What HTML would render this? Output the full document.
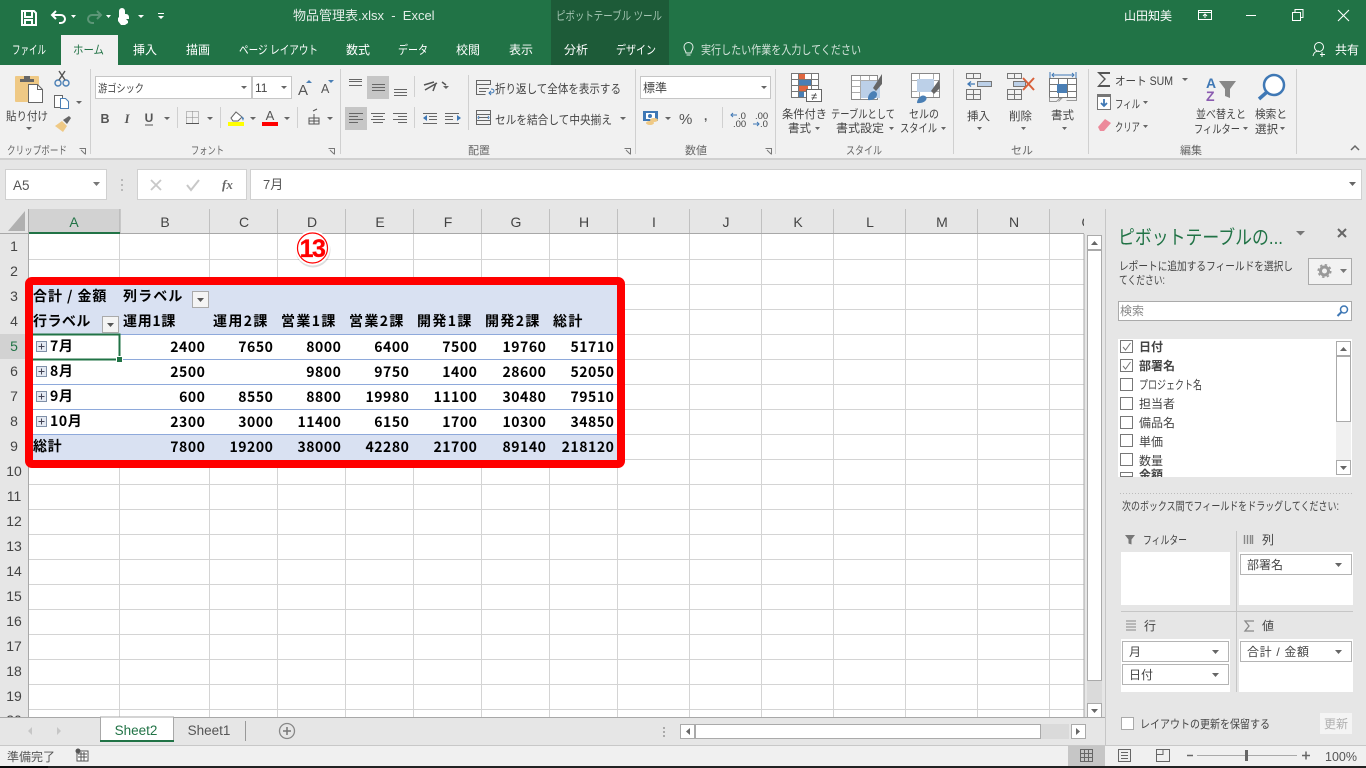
<!DOCTYPE html>
<html lang="ja"><head><meta charset="utf-8"><title>物品管理表.xlsx - Excel</title>
<style>
html,body{margin:0;padding:0;background:#e6e6e6;overflow:hidden}
svg{display:block;position:absolute;left:0;top:0}
text{font-family:"Liberation Sans","Noto Sans CJK JP",sans-serif;font-size:12px;fill:#444;white-space:pre}
.w text,text.w{fill:#fff}
.m{text-anchor:middle}
.e{text-anchor:end}
.h{font-size:14px;fill:#444;text-anchor:middle}
.t text{font-family:"Noto Sans CJK JP",sans-serif;font-size:14px;font-weight:700;fill:#000;letter-spacing:.6px}
.n text{text-anchor:end;letter-spacing:.55px}
.ln{fill:none;stroke:#666;stroke-width:1}
</style></head><body>
<svg width="1366" height="768" viewBox="0 0 1366 768" xmlns="http://www.w3.org/2000/svg">
<!-- backgrounds -->
<rect width="1366" height="768" fill="#e6e6e6"/>
<rect width="1366" height="65" fill="#217346"/>
<rect x="551" width="118" height="65" fill="#1d5b38"/>
<rect y="65" width="1366" height="93" fill="#f1f1f1"/>
<rect y="158" width="1366" height="2" fill="#d0d0d0"/>
<rect x="61" y="35" width="57" height="31" fill="#f1f1f1"/>

<!-- QAT -->
<path d="M22 11h12l2 2v12H22z M25 11v6h7v-6 M25 25v-5h7v5" fill="none" stroke="#fff" stroke-width="2"/>
<path d="M56 11l-4 4 4 4 M52 15h9a4 4 0 0 1 4 4 4 4 0 0 1-4 4h-2" fill="none" stroke="#fff" stroke-width="2"/>
<path d="M71 15h5l-2.500 3zM106 15h5l-2.500 3zM138 15h6l-3 3zM158 13h6v1h-6zM158 16h6l-3 3z" fill="#fff"/>
<path d="M97 11l4 4-4 4 M101 15h-9a4 4 0 0 0-4 4 4 4 0 0 0 4 4h2" fill="none" stroke="#5c9677" stroke-width="2"/>
<path d="M119 17v-6a3 3 0 0 1 6 0v3h1a3 3 0 0 1 3 3v2h-3l2 2v2l-3 2h-4l-3-4v-3z" fill="#fff"/>

<!-- title -->
<text x="293" y="20" style="font-size:13px;fill:#e4eee8">物品管理表.xlsx  -  Excel</text>
<text x="556" y="20" style="fill:#a5c6b3" textLength="106" lengthAdjust="spacingAndGlyphs">ピボットテーブル ツール</text>
<text x="1124" y="20" class="w" style="font-size:12px">山田知美</text>
<path d="M1198.500 10.500h13v9h-13zM1198.500 12.500h13M1205 18v-4M1203 16l2-2 2 2" fill="none" stroke="#fff"/>
<path d="M1246 15.500h10" stroke="#fff"/>
<path d="M1292.500 12.500h8v8h-8zM1295 12v-2.500h8v8h-2.500" fill="none" stroke="#fff"/>
<path d="M1338 10l11 11M1349 10l-11 11" stroke="#fff" stroke-width="1.100"/>

<!-- tabs -->
<g class="w">
<text x="12" y="54" textLength="34" lengthAdjust="spacingAndGlyphs">ファイル</text>
<text x="133" y="54">挿入</text>
<text x="186" y="54">描画</text>
<text x="239" y="54" textLength="79" lengthAdjust="spacingAndGlyphs">ページ レイアウト</text>
<text x="346" y="54">数式</text>
<text x="398" y="54" textLength="30" lengthAdjust="spacingAndGlyphs">データ</text>
<text x="456" y="54">校閲</text>
<text x="509" y="54">表示</text>
<text x="564" y="54">分析</text>
<text x="616" y="54" textLength="40" lengthAdjust="spacingAndGlyphs">デザイン</text>
<text x="1335" y="54">共有</text>
</g>
<text x="73" y="54" style="fill:#217346" textLength="31" lengthAdjust="spacingAndGlyphs">ホーム</text>
<text x="701" y="54" style="fill:#d3e3da" textLength="160" lengthAdjust="spacingAndGlyphs">実行したい作業を入力してください</text>
<path d="M686 53c0-2-2-3-2-6a4.500 4.500 0 0 1 9 0c0 3-2 4-2 6zM686.500 55h4" fill="none" stroke="#e5efe9"/>
<circle cx="1319" cy="47" r="4.500" fill="none" stroke="#fff"/>
<path d="M1313 56c1-4 3-5 6-5M1322 52v5M1320 54.500h5" fill="none" stroke="#fff"/>

<!-- ribbon separators -->
<path d="M90.500 69v85M340.500 69v85M635.500 69v85M775.500 69v85M953.500 69v85M1088.500 69v85M1296.500 69v85" stroke="#d0d0d0"/>
<path d="M177.500 107v21M220.500 107v21M297.500 107v21M414.500 76v21M414.500 107v21M468.500 75v55M722.500 107v21" stroke="#d0d0d0"/>

<!-- clipboard -->
<rect x="15" y="76" width="24" height="26" rx="1" fill="#efc985"/>
<path d="M20 79h4v-3h6v3h4v3H20z" fill="#666"/>
<path d="M28.500 84.500h9l5 5v13h-14z" fill="#fff" stroke="#666"/>
<path d="M37.500 84.500v5h5" fill="none" stroke="#666"/>
<text x="6" y="120" style="font-size:11.500px" textLength="42" lengthAdjust="spacingAndGlyphs">貼り付け</text>
<path d="M26 127h6l-3 3z" fill="#666"/>
<!-- scissors -->
<circle cx="58" cy="83" r="3" fill="none" stroke="#4a7fb5" stroke-width="1.400"/><circle cx="66" cy="83" r="3" fill="none" stroke="#4a7fb5" stroke-width="1.400"/>
<path d="M59 80l6-9M65 80l-6-9" stroke="#555" stroke-width="1.400"/>
<!-- copy -->
<path d="M54.500 95.500h8v12h-8z" fill="#fff" stroke="#666"/><path d="M60.500 98.500h5l3 3v7h-8z" fill="#fff" stroke="#4a7fb5"/>
<path d="M76 101h6l-3 3z" fill="#666"/>
<!-- brush -->
<path d="M55 126l7-5 5 5-4 6z" fill="#efc985"/><path d="M63 120l6-4 2 2-4 6z" fill="#666"/>
<!-- font boxes -->
<rect x="95.500" y="76.500" width="156" height="22" fill="#fff" stroke="#c6c6c6"/>
<rect x="252.500" y="76.500" width="39" height="22" fill="#fff" stroke="#c6c6c6"/>
<text x="98" y="92" style="font-size:11px" textLength="46" lengthAdjust="spacingAndGlyphs">游ゴシック</text>
<text x="255" y="92" style="font-size:12px">11</text>
<path d="M241 86h6l-3 3zM281 86h6l-3 3z" fill="#666"/>
<text x="298" y="95" style="font-size:15px;fill:#555">A</text>
<path d="M306 83h6l-3-3z" fill="#4a7fb5"/>
<text x="321" y="93" style="font-size:12.500px;fill:#555">A</text>
<path d="M328 80h6l-3 3z" fill="#4a7fb5"/>
<!-- font row2 -->
<text x="105" y="123" class="m" style="font-weight:700;font-size:12.500px;fill:#555">B</text>
<text x="127" y="123" class="m" style="font-style:italic;font-weight:700;font-family:'Liberation Serif';font-size:12.500px;fill:#555">I</text>
<text x="149" y="122" class="m" style="font-weight:700;font-size:12px;fill:#555">U</text>
<path d="M145 125h8" stroke="#555"/>
<path d="M164 117h6l-3 3zM207 117h6l-3 3zM250 117h6l-3 3zM284 117h6l-3 3zM327 117h6l-3 3z" fill="#666"/>
<path d="M186.500 111.500h12v12h-12zM192.500 111.500v12M186.500 117.500h12" fill="none" stroke="#888" stroke-dasharray="1 1"/>
<path d="M186 123.500h13" stroke="#555"/>
<path d="M231 118l5-6 6 5-4 4h-5z" fill="#fff" stroke="#666"/>
<path d="M241 116l3 2-1 3z" fill="#4a7fb5"/>
<rect x="228" y="122" width="16" height="4" fill="#ff0"/>
<text x="270" y="120" class="m" style="font-size:13px;fill:#555">A</text>
<rect x="262" y="122" width="16" height="4" fill="#f00"/>
<path d="M313 111l4-2M309 118h10v6h-10zM314 114v10M309 121h10" fill="none" stroke="#555"/>
<text x="7" y="154" style="font-size:11px;fill:#666" textLength="60" lengthAdjust="spacingAndGlyphs">クリップボード</text>
<text x="191" y="154" style="font-size:11px;fill:#666" textLength="33" lengthAdjust="spacingAndGlyphs">フォント</text>
<text x="468" y="154" style="font-size:11px;fill:#666">配置</text>
<text x="685" y="154" style="font-size:11px;fill:#666">数値</text>
<text x="846" y="154" style="font-size:11px;fill:#666" textLength="36" lengthAdjust="spacingAndGlyphs">スタイル</text>
<text x="1011" y="154" style="font-size:11px;fill:#666">セル</text>
<text x="1180" y="154" style="font-size:11px;fill:#666">編集</text>
<path d="M79.500 148.500h6v6M81 150l4 4M328.500 148.500h6v6M330 150l4 4M624.500 148.500h6v6M626 150l4 4M765.500 148.500h6v6M767 150l4 4" fill="none" stroke="#777"/>
<path d="M1351 150l4-4 4 4" fill="none" stroke="#666" stroke-width="1.500"/>

<!-- alignment -->
<rect x="367" y="76" width="22" height="23" fill="#c6c6c6"/>
<rect x="345" y="107" width="22" height="23" fill="#c6c6c6"/>
<path d="M349 79.500h13M349 81.500h13M349 85.500h13M372 84.500h13M372 87.500h13M372 90.500h13M394 89.500h13M394 92.500h13M394 95.500h13" stroke="#666"/>
<path d="M349 113.500h14M349 116.500h9M349 119.500h14M349 122.500h9M371 113.500h14M373 116.500h10M371 119.500h14M373 122.500h10M393 113.500h14M398 116.500h9M393 119.500h14M398 122.500h9" stroke="#666"/>
<path d="M424 85l10-3M425 90l12-7M433 91l3-8M442 82l4 3" fill="none" stroke="#555" stroke-width="1.500"/>
<path d="M443 86h6l-3 3zM620 117h6l-3 3z" fill="#666"/>
<path d="M423 113.500h14M429 116.500h8M429 119.500h8M423 123.500h14M445 113.500h14M445 116.500h8M445 119.500h8M445 123.500h14" stroke="#666"/>
<path d="M427 115l-4 3 4 3zM457 115l4 3-4 3z" fill="#3f78b5"/>
<path d="M476.500 80.500h14v4h-14zM476.500 84.500v10h9M479 88.500h10M479 91.500h7" fill="none" stroke="#666"/>
<path d="M491 89c2 0 3 1 3 2s-1 2-3 2h-2M491 91l-2 2 2 2" fill="none" stroke="#3f78b5"/>
<text x="495" y="93" textLength="126" lengthAdjust="spacingAndGlyphs">折り返して全体を表示する</text>
<path d="M476.500 110.500h14v14h-14zM476.500 114.500h14M476.500 120.500h14M479 117.500h9" fill="none" stroke="#666"/>
<path d="M479 116l-1 1.500 1 1.500M488 116l1 1.500-1 1.500" fill="none" stroke="#3f78b5"/>
<text x="495" y="124" textLength="117" lengthAdjust="spacingAndGlyphs">セルを結合して中央揃え</text>

<!-- number -->
<rect x="640.500" y="76.500" width="130" height="22" fill="#fff" stroke="#c6c6c6"/>
<text x="643" y="92">標準</text>
<path d="M761 86h6l-3 3zM665 117h6l-3 3z" fill="#666"/>
<rect x="643" y="111" width="15" height="10" fill="#3f78b5"/><rect x="646" y="113" width="9" height="6" fill="#fff"/><circle cx="650" cy="116" r="2" fill="#3f78b5"/>
<ellipse cx="650" cy="123" rx="4" ry="2" fill="#efc985"/><ellipse cx="654" cy="120" rx="4" ry="2" fill="#efc985"/>
<text x="679" y="124" style="font-size:15px;fill:#555">%</text>
<text x="704" y="120" style="font-size:12px;font-weight:700;fill:#555">,</text>
<path d="M722.500 107v21" stroke="#d0d0d0"/>
<text x="738" y="119" style="font-size:9.500px">.0</text><text x="733" y="127" style="font-size:9.500px">.00</text>
<path d="M731 115h6M733 113l-2 2 2 2" fill="none" stroke="#3f78b5"/>
<text x="755" y="119" style="font-size:9.500px">.00</text><text x="760" y="127" style="font-size:9.500px">.0</text>
<path d="M753 124h6M757 122l2 2-2 2" fill="none" stroke="#3f78b5"/>

<!-- styles -->
<path d="M791.500 73.500h27v24h-27zM791.500 79.500h27M791.500 85.500h27M791.500 91.500h27M798.500 73.500v24M811.500 73.500v24" fill="#fff" stroke="#777"/>
<rect x="799" y="74" width="6" height="5" fill="#e0663f"/><rect x="799" y="80" width="12" height="5" fill="#4a7fb5"/><rect x="799" y="86" width="9" height="5" fill="#e0663f"/><rect x="799" y="92" width="5" height="5" fill="#4a7fb5"/>
<rect x="806.500" y="89.500" width="15" height="12" fill="#fff" stroke="#666"/>
<text x="814" y="100" class="m" style="font-size:11px;fill:#333">≠</text>
<text x="782" y="118" style="font-size:11.500px" textLength="45" lengthAdjust="spacingAndGlyphs">条件付き</text>
<text x="788" y="132" style="font-size:11.500px">書式</text>
<path d="M815 127h5l-2.500 3zM889 127h5l-2.500 3zM941 127h5l-2.500 3z" fill="#666"/>
<path d="M851.500 75.500h26v24h-26z" fill="#fff" stroke="#888"/>
<path d="M852 80.500h25M852 86.500h25M852 92.500h25M860.500 76v23M869.500 76v23" stroke="#aaa"/>
<rect x="861" y="81" width="19" height="17" fill="#bcd0e8"/>
<path d="M882 74l-9 14 3 3 6-7z" fill="#666"/><path d="M868 98c0-4 5-9 8-6 3 3-1 9-8 8z" fill="#4a7fb5"/>
<text x="831" y="118" style="font-size:11.500px" textLength="64" lengthAdjust="spacingAndGlyphs">テーブルとして</text>
<text x="836" y="132" style="font-size:11.500px" textLength="48" lengthAdjust="spacingAndGlyphs">書式設定</text>
<path d="M911.500 73.500h28v24h-28z" fill="#fff" stroke="#888"/>
<path d="M912 80.500h27M912 91.500h27M919.500 74v23M933.500 74v23" stroke="#aaa"/>
<rect x="917" y="79" width="17" height="13" fill="#bcd0e8"/>
<path d="M939 80l-8 11 3 3 6-6z" fill="#666"/><path d="M917 103c0-4 4-9 8-7 4 2 0 8-8 7z" fill="#4a7fb5"/>
<text x="909" y="118" style="font-size:11.500px" textLength="30" lengthAdjust="spacingAndGlyphs">セルの</text>
<text x="900" y="132" style="font-size:11.500px" textLength="37" lengthAdjust="spacingAndGlyphs">スタイル</text>

<!-- cells group -->
<path d="M966.500 73.500h14v5h-14zM973.500 73.500v5M966.500 89.500h14v10h-14zM973.500 89.500v10M966.500 94.500h14" fill="none" stroke="#777"/>
<rect x="977.500" y="81.500" width="14" height="5" fill="#bcd0e8" stroke="#777"/>
<path d="M975 84h-6M971 81.500l-3 2.500 3 2.500" fill="none" stroke="#3f78b5" stroke-width="1.300"/>
<text x="967" y="120" style="font-size:11.500px">挿入</text>
<path d="M977 127h5l-2.500 3zM1021 127h5l-2.500 3zM1062 127h5l-2.500 3z" fill="#666"/>
<path d="M1007.500 73.500h14v5h-14zM1014.500 73.500v5M1007.500 89.500h14v10h-14zM1014.500 89.500v10M1007.500 94.500h14" fill="none" stroke="#777"/>
<rect x="1013.500" y="81.500" width="12" height="5" fill="#bcd0e8" stroke="#777"/>
<path d="M1023 78l11 12M1034 78l-11 12" stroke="#d9603a" stroke-width="2"/>
<text x="1009" y="120" style="font-size:11.500px">削除</text>
<path d="M1049.500 78.500h27v19h-27zM1058.500 78.500v19M1067.500 78.500v19M1049.500 84.500h27M1049.500 91.500h27" fill="#fff" stroke="#777"/>
<rect x="1057" y="84" width="10" height="9" fill="#4a7fb5"/>
<path d="M1050 72v6M1076 72v6M1052 75h22M1054 73l-2 2 2 2M1072 73l2 2-2 2" fill="none" stroke="#3f78b5"/>
<path d="M1049.500 97.500v4h7l3-3h2l-3 3M1076.500 97.500v3h-10" fill="none" stroke="#999"/>
<text x="1051" y="119" style="font-size:11.500px">書式</text>

<!-- editing -->
<path d="M1097 72h13v2h-9l5 5-6 6h10v2h-13l7-8z" fill="#555"/>
<text x="1115" y="85" style="font-size:11.500px" textLength="58" lengthAdjust="spacingAndGlyphs">オート SUM</text>
<path d="M1182 78h6l-3 3zM1143 101h5l-2.500 3zM1143 125h5l-2.500 3zM1243 127h5l-2.500 3zM1280 127h5l-2.500 3z" fill="#666"/>
<rect x="1097.500" y="95.500" width="13" height="14" fill="#fff" stroke="#777"/>
<rect x="1097" y="94" width="14" height="3" fill="#777"/>
<path d="M1104 99v7M1101 103l3 3 3-3" fill="none" stroke="#3f78b5" stroke-width="1.800"/>
<text x="1115" y="108" style="font-size:11.500px" textLength="25" lengthAdjust="spacingAndGlyphs">フィル</text>
<path d="M1098 127l7-8 6 4-7 8h-4z" fill="#ec8a9b"/>
<text x="1115" y="131" style="font-size:11.500px" textLength="25" lengthAdjust="spacingAndGlyphs">クリア</text>
<text x="1206" y="88" style="font-size:14px;font-weight:700;fill:#3f78b5">A</text>
<text x="1206" y="101" style="font-size:14px;font-weight:700;fill:#8a5bb0">Z</text>
<path d="M1219 81h17l-6 8v9l-5-2v-7z" fill="#888"/>
<text x="1196" y="118" style="font-size:11.500px" textLength="50" lengthAdjust="spacingAndGlyphs">並べ替えと</text>
<text x="1194" y="133" style="font-size:11.500px" textLength="46" lengthAdjust="spacingAndGlyphs">フィルター</text>
<circle cx="1274" cy="85" r="10" fill="#fff" stroke="#3f78b5" stroke-width="2.500"/>
<path d="M1267 92l-8 7" stroke="#3f78b5" stroke-width="3.500"/>
<text x="1255" y="118" style="font-size:11.500px" textLength="32" lengthAdjust="spacingAndGlyphs">検索と</text>
<text x="1255" y="133" style="font-size:11.500px">選択</text>

<!-- formula bar -->
<rect x="5.500" y="169.500" width="101" height="30" fill="#fff" stroke="#d0d0d0"/>
<text x="13" y="190" style="font-size:13.500px;fill:#555">A5</text>
<path d="M93 182h7l-3.500 4z" fill="#777"/>
<path d="M122 179v2M122 184v2M122 189v2" stroke="#aaa" stroke-width="1.500"/>
<rect x="137.500" y="169.500" width="109" height="30" fill="#fff" stroke="#d0d0d0"/>
<rect x="250.500" y="169.500" width="1111" height="30" fill="#fff" stroke="#d0d0d0"/>
<path d="M151 180l10 10M161 180l-10 10" stroke="#c8c8c8" stroke-width="1.800"/>
<path d="M187 185l4 5 8-10" fill="none" stroke="#c8c8c8" stroke-width="2"/>
<text x="222" y="189" style="font-family:'Liberation Serif';font-style:italic;font-weight:700;font-size:13px;fill:#666">fx</text>
<text x="263" y="189" style="font-size:13px;fill:#555">7月</text>
<path d="M1349 182h7l-3.500 4z" fill="#666"/>

<!-- headers -->
<rect y="209" width="1085" height="25" fill="#e6e6e6"/>
<rect y="234" width="29" height="483" fill="#e6e6e6"/>
<rect x="29" y="209" width="91" height="25" fill="#d2d2d2"/>
<rect x="0" y="334" width="29" height="25" fill="#d2d2d2"/>
<path d="M25 211v20H8z" fill="#b0b0b0"/>
<path d="M209.500 209v25M277.500 209v25M345.500 209v25M413.500 209v25M481.500 209v25M549.500 209v25M617.500 209v25M689.500 209v25M761.500 209v25M833.500 209v25M905.500 209v25M977.500 209v25M1049.500 209v25" stroke="#c0c0c0"/>
<path d="M120 209v25" stroke="#aaa"/>
<g class="h">
<text x="74" y="227" class="h" style="fill:#217346">A</text><text x="165" y="227" class="h">B</text><text x="244" y="227" class="h">C</text><text x="312" y="227" class="h">D</text><text x="380" y="227" class="h">E</text><text x="448" y="227" class="h">F</text><text x="516" y="227" class="h">G</text><text x="584" y="227" class="h">H</text><text x="654" y="227" class="h">I</text><text x="726" y="227" class="h">J</text><text x="798" y="227" class="h">K</text><text x="870" y="227" class="h">L</text><text x="942" y="227" class="h">M</text><text x="1014" y="227" class="h">N</text>
<text x="1087" y="227" class="h">O</text>
</g>
<rect x="1084" y="209" width="21" height="25" fill="#e6e6e6"/>
<g>
<text x="14" y="251" class="h">1</text><text x="14" y="276" class="h">2</text><text x="14" y="301" class="h">3</text><text x="14" y="326" class="h">4</text><text x="14" y="351" class="h" style="fill:#217346">5</text><text x="14" y="376" class="h">6</text><text x="14" y="401" class="h">7</text><text x="14" y="426" class="h">8</text><text x="14" y="451" class="h">9</text><text x="14" y="476" class="h">10</text><text x="14" y="501" class="h">11</text><text x="14" y="526" class="h">12</text><text x="14" y="551" class="h">13</text><text x="14" y="576" class="h">14</text><text x="14" y="601" class="h">15</text><text x="14" y="626" class="h">16</text><text x="14" y="651" class="h">17</text><text x="14" y="676" class="h">18</text><text x="14" y="701" class="h">19</text><text x="14" y="725" class="h">20</text>
</g>
<rect y="717" width="100" height="1" fill="#e6e6e6"/>

<!-- grid -->
<rect x="29" y="234" width="1055" height="483" fill="#fff"/>
<path d="M29 259.500h1055M29 284.500h1055M29 309.500h1055M29 334.500h1055M29 359.500h1055M29 384.500h1055M29 409.500h1055M29 434.500h1055M29 459.500h1055M29 484.500h1055M29 509.500h1055M29 534.500h1055M29 559.500h1055M29 584.500h1055M29 609.500h1055M29 634.500h1055M29 659.500h1055M29 684.500h1055M29 709.500h1055M119.500 234v483M209.500 234v483M277.500 234v483M345.500 234v483M413.500 234v483M481.500 234v483M549.500 234v483M617.500 234v483M689.500 234v483M761.500 234v483M833.500 234v483M905.500 234v483M977.500 234v483M1049.500 234v483" stroke="#d4d4d4"/>
<path d="M28.500 209v508M0 233.500h1084M1084 234v483" stroke="#a8a8a8"/>
<rect x="29" y="232" width="91" height="2" fill="#217346"/>
<rect x="27" y="334" width="2" height="25" fill="#217346"/>

<!-- pivot -->
<rect x="33" y="285" width="584" height="49" fill="#d9e1f2"/>
<rect x="33" y="434" width="584" height="26" fill="#d9e1f2"/>
<rect x="33" y="334" width="584" height="100" fill="#fff"/>
<path d="M33 334.500h584M33 359.500h584M33 384.500h584M33 409.500h584M33 434.500h584" stroke="#8ea9db"/>
<rect x="29" y="281" width="592" height="183" rx="3" fill="none" stroke="#f00" stroke-width="8"/>
<g class="t">
<text x="33" y="301" textLength="74">合計 / 金額</text>
<text x="123" y="301" textLength="60">列ラベル</text>
<text x="33" y="326" textLength="58">行ラベル</text>
<text x="123" y="326" textLength="53">運用1課</text>
<text x="213" y="326" textLength="55">運用2課</text>
<text x="281" y="326" textLength="55">営業1課</text>
<text x="349" y="326" textLength="55">営業2課</text>
<text x="417" y="326" textLength="55">開発1課</text>
<text x="485" y="326" textLength="55">開発2課</text>
<text x="553" y="326" textLength="30">総計</text>
<text x="50" y="351">7月</text><text x="50" y="376">8月</text><text x="50" y="401">9月</text><text x="50" y="426">10月</text><text x="33" y="451">総計</text>
</g>
<g class="t n">
<text x="205.500" y="352">2400</text><text x="273.500" y="352">7650</text><text x="341.500" y="352">8000</text><text x="409.500" y="352">6400</text><text x="477.500" y="352">7500</text><text x="546.500" y="352">19760</text><text x="614.500" y="352">51710</text>
<text x="205.500" y="377">2500</text><text x="341.500" y="377">9800</text><text x="409.500" y="377">9750</text><text x="477.500" y="377">1400</text><text x="546.500" y="377">28600</text><text x="614.500" y="377">52050</text>
<text x="205.500" y="402">600</text><text x="273.500" y="402">8550</text><text x="341.500" y="402">8800</text><text x="409.500" y="402">19980</text><text x="477.500" y="402">11100</text><text x="546.500" y="402">30480</text><text x="614.500" y="402">79510</text>
<text x="205.500" y="427">2300</text><text x="273.500" y="427">3000</text><text x="341.500" y="427">11400</text><text x="409.500" y="427">6150</text><text x="477.500" y="427">1700</text><text x="546.500" y="427">10300</text><text x="614.500" y="427">34850</text>
<text x="205.500" y="452">7800</text><text x="273.500" y="452">19200</text><text x="341.500" y="452">38000</text><text x="409.500" y="452">42280</text><text x="477.500" y="452">21700</text><text x="546.500" y="452">89140</text><text x="614.500" y="452">218120</text>
</g>
<!-- filter buttons -->
<rect x="192.500" y="291.500" width="16" height="16" fill="#f4f4f4" stroke="#aaa"/>
<rect x="102.500" y="316.500" width="16" height="16" fill="#f4f4f4" stroke="#aaa"/>
<path d="M197 298h7l-3.500 4zM107 323h7l-3.500 4z" fill="#555"/>
<!-- expanders -->
<path d="M36.500 341.500h10v10h-10zM36.500 366.500h10v10h-10zM36.500 391.500h10v10h-10zM36.500 416.500h10v10h-10z" fill="#e4e9f2" stroke="#8090a8"/>
<path d="M38.500 346.500h6M41.500 343.500v6M38.500 371.500h6M41.500 368.500v6M38.500 396.500h6M41.500 393.500v6M38.500 421.500h6M41.500 418.500v6" stroke="#445"/>
<!-- selection -->
<path d="M33 334.500h86.500v25H33" fill="none" stroke="#217346" stroke-width="2"/>
<rect x="116" y="356" width="7" height="7" fill="#fff"/>
<rect x="117" y="357" width="5" height="5" fill="#217346"/>

<!-- badge -->
<circle cx="313" cy="250" r="17.500" fill="#000" opacity=".13"/>
<circle cx="312.500" cy="248" r="17.500" fill="#fff"/>
<circle cx="312.500" cy="248" r="15" fill="#fff" stroke="#f00" stroke-width="1.200"/>
<text x="312" y="257" class="m" style="font-size:25px;font-weight:700;fill:#f00;letter-spacing:-1.500px" stroke="#f00" stroke-width=".3">13</text>

<!-- vertical scrollbar -->
<rect x="1085" y="234" width="18" height="483" fill="#e6e6e6"/>
<rect x="1087.500" y="235.500" width="14" height="14" fill="#fff" stroke="#aaa"/>
<path d="M1091 245h7l-3.500-4z" fill="#666"/>
<rect x="1087.500" y="250.500" width="14" height="430" fill="#fff" stroke="#aaa"/>
<rect x="1087" y="681" width="15" height="22" fill="#dadada"/>
<rect x="1087.500" y="703.500" width="14" height="14" fill="#fff" stroke="#aaa"/>
<path d="M1091 709h7l-3.500 4z" fill="#666"/>

<!-- sheet tabs -->
<rect y="717" width="1105" height="28" fill="#e6e6e6"/>
<path d="M0 717.500h1105" stroke="#a8a8a8"/>
<path d="M100.500 742v-25h73v25" fill="#fff" stroke="#a8a8a8"/>
<rect x="100" y="740" width="74" height="2" fill="#217346"/>
<text x="136" y="735" class="m" style="font-size:13.500px;fill:#217346">Sheet2</text>
<text x="209" y="735" class="m" style="font-size:13.500px;fill:#555">Sheet1</text>
<path d="M245.500 721v20" stroke="#999"/>
<circle cx="287" cy="731" r="7.500" fill="none" stroke="#888" stroke-width="1.300"/>
<path d="M283 731h8M287 727v8" stroke="#777" stroke-width="1.500"/>
<path d="M32 727v8l-4-4zM57 727v8l4-4z" fill="#c6c6c6"/>
<path d="M664 727v2M664 731v2M664 735v2" stroke="#aaa" stroke-width="2"/>
<rect x="1041" y="724" width="28" height="15" fill="#dadada"/>
<rect x="680.500" y="724.500" width="14" height="14" fill="#fff" stroke="#aaa"/>
<rect x="695.500" y="724.500" width="345" height="14" fill="#fff" stroke="#aaa"/>
<rect x="1071.500" y="724.500" width="14" height="14" fill="#fff" stroke="#aaa"/>
<path d="M690 728v7l-4-3.500zM1076 728v7l4-3.500z" fill="#666"/>

<!-- pane -->
<rect x="1105" y="209" width="261" height="536" fill="#e6e6e6"/>
<path d="M1105.500 209v536" stroke="#c6c6c6"/>
<text x="1118" y="244" style="font-size:19.500px;fill:#217346" textLength="165" lengthAdjust="spacingAndGlyphs">ピボットテーブルの...</text>
<path d="M1296 231h9l-4.500 4.500z" fill="#777"/>
<path d="M1338 229l8 8M1346 229l-8 8" stroke="#666" stroke-width="2"/>
<text x="1119" y="270" style="font-size:11.500px" textLength="174" lengthAdjust="spacingAndGlyphs">レポートに追加するフィールドを選択し</text>
<text x="1119" y="284" style="font-size:11.500px" textLength="46" lengthAdjust="spacingAndGlyphs">てください:</text>
<rect x="1308.500" y="258.500" width="43" height="26" fill="#f2f2f2" stroke="#aaa"/>
<circle cx="1324.500" cy="271" r="4" fill="none" stroke="#999" stroke-width="3"/>
<circle cx="1324.500" cy="271" r="6.300" fill="none" stroke="#999" stroke-width="1.500" stroke-dasharray="2.500 2.450"/>
<path d="M1340 269h7l-3.500 4z" fill="#777"/>
<rect x="1118.500" y="301.500" width="233" height="19" fill="#fff" stroke="#aaa"/>
<text x="1120" y="315" style="fill:#888">検索</text>
<circle cx="1344" cy="309.500" r="3.500" fill="none" stroke="#3f78b5" stroke-width="1.500"/>
<path d="M1341.500 312l-4 4" stroke="#3f78b5" stroke-width="2"/>
<rect x="1118" y="339" width="234" height="138" fill="#fff"/>
<path d="M1120.500 340.500h12v12h-12zM1120.500 359.500h12v12h-12zM1120.500 378.500h12v12h-12zM1120.500 397.500h12v12h-12zM1120.500 416.500h12v12h-12zM1120.500 434.500h12v12h-12zM1120.500 453.500h12v12h-12zM1120.500 472.500h12v4h-12z" fill="#fff" stroke="#777"/>
<path d="M1123 347l2.500 3 5-7M1123 366l2.500 3 5-7" fill="none" stroke="#777"/>
<text x="1139" y="351" style="font-weight:700">日付</text>
<text x="1139" y="370" style="font-weight:700">部署名</text>
<text x="1139" y="389" textLength="63" lengthAdjust="spacingAndGlyphs">プロジェクト名</text>
<text x="1139" y="408">担当者</text>
<text x="1139" y="427">備品名</text>
<text x="1139" y="446">単価</text>
<text x="1139" y="465">数量</text>
<svg x="1139" y="466" width="60" height="11"><text x="0" y="13" style="font-weight:700">金額</text></svg>
<rect x="1336" y="421" width="15" height="40" fill="#f0f0f0"/>
<rect x="1336.500" y="341.500" width="14" height="14" fill="#fff" stroke="#aaa"/>
<rect x="1336.500" y="356.500" width="14" height="65" fill="#fff" stroke="#aaa"/>
<rect x="1336.500" y="460.500" width="14" height="14" fill="#fff" stroke="#aaa"/>
<path d="M1340 351h7l-3.500-4zM1340 466h7l-3.500 4z" fill="#666"/>
<path d="M1120 493.500h232" stroke="#bbb" stroke-dasharray="1 2"/>
<text x="1122" y="510" style="font-size:11.500px" textLength="217" lengthAdjust="spacingAndGlyphs">次のボックス間でフィールドをドラッグしてください:</text>
<path d="M1125 535h10l-3.500 4.500v5l-3-1v-4z" fill="#777"/>
<text x="1143" y="544" style="font-size:11.500px" textLength="44" lengthAdjust="spacingAndGlyphs">フィルター</text>
<path d="M1244.500 535v9M1247.500 535v9M1250.500 535v9M1252.500 535v9" stroke="#888" stroke-width="1.400"/>
<text x="1262" y="544">列</text>
<rect x="1121" y="552" width="109" height="53" fill="#fff"/>
<rect x="1239" y="552" width="114" height="53" fill="#fff"/>
<path d="M1121 611.500h232M1236.500 531v161" stroke="#c6c6c6"/>
<path d="M1126 621h10M1126 624h10M1126 627h10M1126 630h10" stroke="#888"/>
<text x="1144" y="630">行</text>
<path d="M1254 621h-9l4 5-4 5h9" fill="none" stroke="#888" stroke-width="1.300"/>
<text x="1262" y="630">値</text>
<rect x="1121" y="639" width="109" height="53" fill="#fff"/>
<rect x="1239" y="639" width="114" height="53" fill="#fff"/>
<path d="M1240.500 554.500h111v20h-111zM1122.500 641.500h106v20h-106zM1122.500 664.500h106v20h-106zM1240.500 641.500h111v20h-111z" fill="#fff" stroke="#b4b4b4"/>
<text x="1247" y="569">部署名</text>
<text x="1129" y="656">月</text>
<text x="1129" y="679">日付</text>
<text x="1247" y="656" textLength="62" lengthAdjust="spacing">合計 / 金額</text>
<path d="M1335 563h7l-3.500 4zM1212 650h7l-3.500 4zM1212 673h7l-3.500 4zM1335 650h7l-3.500 4z" fill="#666"/>
<rect x="1121.500" y="717.500" width="12" height="12" fill="#fff" stroke="#aaa"/>
<text x="1140" y="728" style="font-size:11.500px" textLength="130" lengthAdjust="spacingAndGlyphs">レイアウトの更新を保留する</text>
<rect x="1320" y="713" width="32" height="21" fill="#f4f4f4"/>
<text x="1336" y="728" class="m" style="fill:#b0b0b0">更新</text>

<!-- status -->
<rect y="745" width="1366" height="21" fill="#f0f0f0"/>
<path d="M0 745.500h1366" stroke="#c8c8c8"/>
<rect y="766" width="1366" height="2" fill="#222"/>
<rect y="766" width="48" height="2" fill="#0a0a0a"/>
<text x="7" y="761" style="fill:#555">準備完了</text>
<rect x="77" y="751" width="11" height="10" fill="#fff" stroke="#555"/>
<circle cx="78" cy="751" r="2.500" fill="#555"/>
<path d="M78 754h9M78 757h9M81 752v9M84 752v9" stroke="#555"/>
<rect x="1068" y="746" width="37" height="20" fill="#c6c6c6"/>
<path d="M1080.500 749.500h12v12h-12zM1080.500 753.500h12M1080.500 757.500h12M1084.500 749.500v12M1088.500 749.500v12" fill="none" stroke="#666"/>
<path d="M1118.500 749.500h12v12h-12zM1121 752.500h7M1121 755.500h7M1121 758.500h7" fill="none" stroke="#666"/>
<path d="M1156.500 749.500h13v12h-13zM1163 749.500v5h-6.500" fill="none" stroke="#666"/>
<path d="M1187 755.500h6M1302 755.500h8M1306 751.500v8" stroke="#666" stroke-width="1.500"/>
<path d="M1197 755.500h100" stroke="#aaa"/>
<rect x="1245" y="750" width="3" height="11" fill="#666"/>
<text x="1325" y="761" style="fill:#555;font-size:12.500px">100%</text>
</svg>
</body></html>
